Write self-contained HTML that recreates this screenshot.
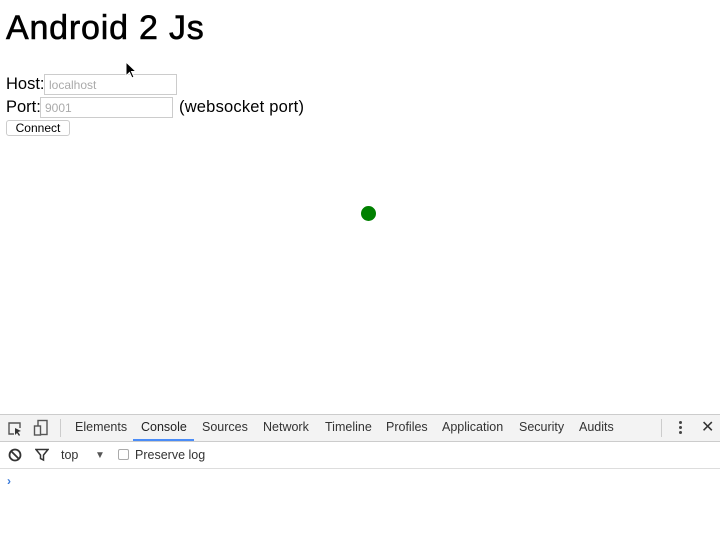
<!DOCTYPE html>
<html><head><style>
*{margin:0;padding:0;box-sizing:border-box}
body{width:720px;height:552px;background:#fff;font-family:"Liberation Sans",sans-serif;position:relative;overflow:hidden;color:#000}
.a{position:absolute;white-space:nowrap}
h1{position:absolute;left:6px;top:9px;font-size:34px;font-weight:normal;letter-spacing:0.8px;-webkit-text-stroke:0.6px #000}
.inp{position:absolute;border:1px solid #ccc;height:21px;font-size:12px;color:#aaa;padding:3px 4px}
.tab{position:absolute;top:420px;font-size:12.5px;color:#333}
</style></head><body>
<h1>Android 2 Js</h1>
<div class="a" style="left:6px;top:75px;font-size:16.5px">Host:</div>
<div class="inp" style="left:44px;top:74px;width:133px">localhost</div>
<div class="a" style="left:6px;top:98px;font-size:16.5px">Port:</div>
<div class="inp" style="left:40px;top:97px;width:133px">9001</div>
<div class="a" style="left:179px;top:98px;font-size:16.5px;letter-spacing:0.2px">(websocket port)</div>
<div class="a" style="left:6px;top:120px;width:64px;height:16px;border:1px solid #ccc;border-radius:3px;font-size:12px;text-align:center;line-height:14px">Connect</div>
<svg class="a" style="left:125px;top:61px" width="14" height="20" viewBox="0 0 14 20"><path d="M1 1 L1 15 L4.5 11.5 L7 17 L9 16 L6.5 10.5 L11 10.5 Z" fill="#000" stroke="#fff" stroke-width="1"/></svg>
<div class="a" style="left:361px;top:206px;width:15px;height:15px;border-radius:50%;background:#008000"></div>

<div class="a" style="left:0;top:414px;width:720px;height:28px;background:#f3f3f3;border-top:1px solid #ccc;border-bottom:1px solid #ccc"></div>
<svg class="a" style="left:7px;top:421px" width="16" height="16" viewBox="0 0 16 16"><path d="M7 13H2V2h11v5" fill="none" stroke="#555" stroke-width="1.4"/><path d="M8 7l6 3-3 1 2 3-1 1-2-3-2 2z" fill="#333"/></svg>
<svg class="a" style="left:33px;top:419px" width="16" height="18" viewBox="0 0 16 18"><rect x="5" y="1.5" width="9" height="14" fill="none" stroke="#555" stroke-width="1.4"/><rect x="1.5" y="7" width="6" height="9" fill="#f3f3f3" stroke="#555" stroke-width="1.4"/></svg>
<div class="a" style="left:60px;top:419px;width:1px;height:18px;background:#ccc"></div>
<div class="tab" style="left:75px">Elements</div>
<div class="tab" style="left:141px;color:#222">Console</div>
<div class="a" style="left:133px;top:439px;width:61px;height:2px;background:#4a8cf7"></div>
<div class="tab" style="left:202px">Sources</div>
<div class="tab" style="left:263px">Network</div>
<div class="tab" style="left:325px">Timeline</div>
<div class="tab" style="left:386px">Profiles</div>
<div class="tab" style="left:442px">Application</div>
<div class="tab" style="left:519px">Security</div>
<div class="tab" style="left:579px">Audits</div>
<div class="a" style="left:661px;top:419px;width:1px;height:18px;background:#ccc"></div>
<div class="a" style="left:679px;top:421px;width:3px;height:3px;border-radius:50%;background:#444;box-shadow:0 5px 0 #444,0 10px 0 #444"></div>
<div class="a" style="left:701px;top:417px;font-size:16px;color:#333">✕</div>

<svg class="a" style="left:8px;top:448px" width="14" height="14" viewBox="0 0 14 14"><circle cx="7" cy="7" r="5.5" fill="none" stroke="#333" stroke-width="1.8"/><path d="M3 3l8 8" stroke="#333" stroke-width="1.8"/></svg>
<svg class="a" style="left:35px;top:448px" width="14" height="14" viewBox="0 0 14 14"><path d="M1 1.5h12L8.5 7v5l-3-1.5V7z" fill="none" stroke="#333" stroke-width="1.5"/></svg>
<div class="a" style="left:61px;top:448px;font-size:12.5px;color:#333">top</div>
<div class="a" style="left:95px;top:450px;font-size:10px;color:#555">▼</div>
<div class="a" style="left:118px;top:449px;width:11px;height:11px;border:1px solid #aaa;border-radius:2px"></div>
<div class="a" style="left:135px;top:448px;font-size:12.5px;color:#333">Preserve log</div>
<div class="a" style="left:0;top:468px;width:720px;height:1px;background:#ddd"></div>
<div class="a" style="left:7px;top:474px;font-size:12px;color:#3879d9;font-weight:bold">›</div>
</body></html>
